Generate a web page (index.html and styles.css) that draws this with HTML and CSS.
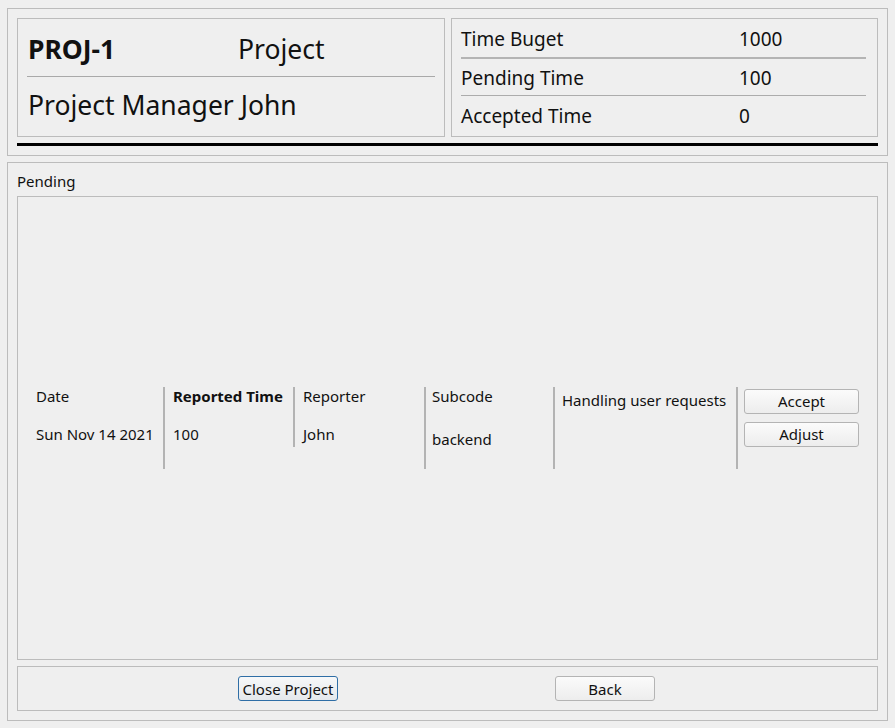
FILE: index.html
```html
<!DOCTYPE html>
<html>
<head>
<meta charset="utf-8">
<link rel="stylesheet" href="styles.css">
</head>
<body>
<div class="window">
  <section class="frame header">
    <div class="cards">
      <div class="card card-left">
        <div class="title-row">
          <span class="proj-id">PROJ-1</span>
          <span class="proj-type">Project</span>
        </div>
        <div class="hsep"></div>
        <div class="manager">Project Manager John</div>
      </div>
      <div class="card card-right">
        <div class="stat stat-1"><span class="stat-label">Time Buget</span><span class="stat-value">1000</span></div>
        <div class="rsep thick"></div>
        <div class="stat stat-2"><span class="stat-label">Pending Time</span><span class="stat-value">100</span></div>
        <div class="rsep"></div>
        <div class="stat stat-3"><span class="stat-label">Accepted Time</span><span class="stat-value">0</span></div>
      </div>
    </div>
    <div class="black-rule"></div>
  </section>

  <section class="frame pending">
    <div class="pending-label">Pending</div>
    <div class="list-box">
      <div class="entry">
        <div class="cell c-date">
          <div class="line">Date</div>
          <div class="line second">Sun Nov 14 2021</div>
        </div>
        <div class="cell c-time divided">
          <div class="line bold">Reported Time</div>
          <div class="line second">100</div>
        </div>
        <div class="cell c-reporter divided short">
          <div class="line">Reporter</div>
          <div class="line second">John</div>
        </div>
        <div class="cell c-subcode divided">
          <div class="line">Subcode</div>
          <div class="line lower">backend</div>
        </div>
        <div class="cell c-desc divided">
          <div class="line desc">Handling user requests</div>
        </div>
        <div class="cell c-actions divided">
          <button class="btn small">Accept</button>
          <button class="btn small">Adjust</button>
        </div>
      </div>
    </div>
    <div class="footer-box">
      <button class="btn wide default">Close Project</button>
      <button class="btn wide">Back</button>
    </div>
  </section>
</div>
</body>
</html>
```

FILE: styles.css
```css
* { box-sizing: border-box; }

html, body {
  margin: 0;
  padding: 0;
  background: #efefef;
}

body {
  font-family: "Noto Sans", "DejaVu Sans", sans-serif;
  color: #111;
  font-size: 15px;
  width: 895px;
  height: 728px;
  overflow: hidden;
}

.window {
  padding: 8px 7px 0 7px;
  display: flex;
  flex-direction: column;
  gap: 6px;
}

.frame {
  border: 1px solid #bcbcbc;
  width: 881px;
}

/* ---------- header ---------- */
.header {
  padding: 9px 9px 9px 9px;
}

.cards {
  display: flex;
  gap: 6px;
}

.card {
  border: 1px solid #bcbcbc;
  height: 119px;
}

.card-left {
  width: 428px;
  display: flex;
  flex-direction: column;
}

.title-row {
  display: flex;
  padding: 12px 0 0 10px;
  height: 57px;
  font-size: 26.5px;
  line-height: 36px;
}

.proj-id {
  font-weight: bold;
  width: 210px;
}

.hsep {
  height: 1px;
  background: #a9a9a9;
  margin: 0 9px 0 9px;
}

.manager {
  font-size: 26.5px;
  line-height: 36px;
  padding: 10px 0 0 10px;
}

.card-right {
  width: 427px;
  display: flex;
  flex-direction: column;
}

.stat {
  display: flex;
  font-size: 19px;
  line-height: 26px;
  padding-left: 9px;
}

.stat-label { width: 278px; }

.stat-1 { height: 38px; padding-top: 7px; }
.stat-2 { height: 36px; padding-top: 6px; }
.stat-3 { height: 40px; padding-top: 7px; }

.rsep {
  height: 1px;
  background: #acacac;
  margin: 0 11px 0 9px;
}

.rsep.thick {
  height: 2px;
  background: #b4b4b4;
}

.black-rule {
  height: 3px;
  background: #000;
  margin-top: 6px;
}

/* ---------- pending ---------- */
.pending {
  height: 559px;
  padding: 8px 9px 9px 9px;
  display: flex;
  flex-direction: column;
}

.pending-label {
  line-height: 20px;
  height: 25px;
}

.list-box {
  border: 1px solid #bcbcbc;
  height: 464px;
  display: flex;
  flex-direction: column;
  justify-content: center;
  padding: 0 17px 1px 18px;
}

.entry {
  display: flex;
  align-items: flex-start;
  height: 82px;
}

.cell {
  height: 82px;
}

.divided {
  border-left: 2px solid #b3b3b3;
}

.short { height: 60px; }

.line {
  line-height: 18px;
  white-space: nowrap;
}

.line.second { margin-top: 20px; }
.line.lower { margin-top: 25px; }
.line.desc { margin-top: 4px; }
.bold { font-weight: bold; }

.c-date { width: 127px; }
.c-time { width: 130px; padding-left: 8px; }
.c-reporter { width: 131px; padding-left: 8px; }
.c-subcode { width: 129px; padding-left: 6px; }
.c-desc { width: 183px; padding-left: 7px; }
.c-actions {
  width: 123px;
  padding: 2px 0 0 6px;
  display: flex;
  flex-direction: column;
  gap: 8px;
}

.btn {
  font-family: inherit;
  font-size: 15px;
  color: #111;
  height: 25px;
  padding: 0;
  border: 1px solid #b4b4b4;
  border-radius: 3px;
  background: linear-gradient(#fbfbfb, #ededed);
  line-height: 22px;
}

.btn.small { width: 115px; }
.btn.wide { width: 100px; }

.btn.default {
  border-color: #2f6ea6;
  background: linear-gradient(#f7f8f9, #e4e8ec);
}

.footer-box {
  margin-top: 6px;
  border: 1px solid #bcbcbc;
  height: 45px;
  display: flex;
  align-items: center;
  padding-left: 220px;
  gap: 217px;
}
```
